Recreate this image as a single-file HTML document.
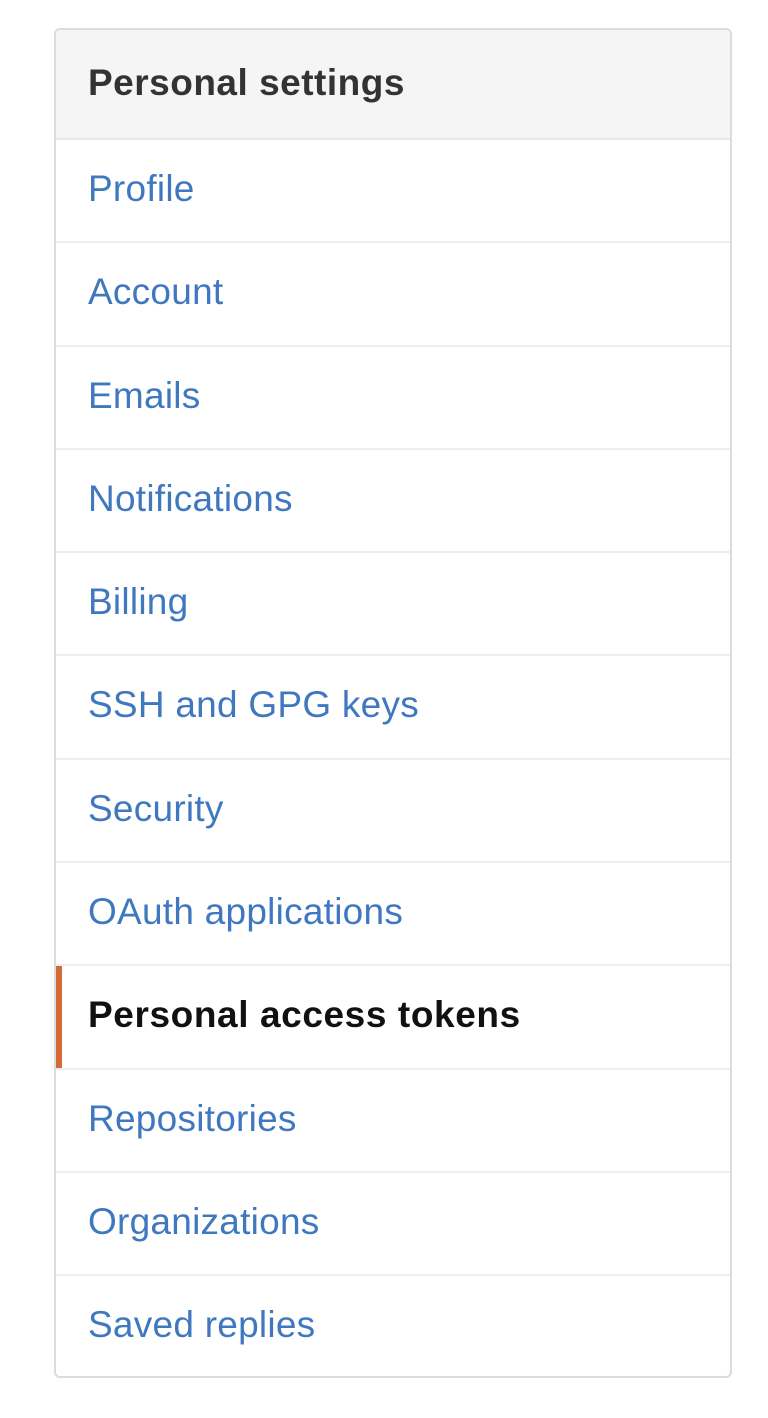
<!DOCTYPE html>
<html><head><style>
body{margin:0;background:#fff;width:768px;height:1418px;font-family:"Liberation Sans",Arial,sans-serif;}
.box{position:absolute;left:54px;top:28px;width:674px;height:1346px;border:2px solid #dcdcdc;border-radius:6px;overflow:hidden;}
.h{height:108px;background:#f5f5f5;border-bottom:2px solid #e8e8e8;font-weight:bold;color:#333;font-size:37px;line-height:106px;padding-left:32px;letter-spacing:0.5px;}
.r{height:101.3px;border-bottom:2px solid #eeeeee;font-size:37px;line-height:98px;padding-left:32px;color:#4078c0;position:relative;letter-spacing:0.25px;}
.r:last-child{border-bottom:none;}
.s{color:#111;font-weight:bold;letter-spacing:0.6px;}
.s:before{content:"";position:absolute;left:0;top:0;bottom:0;width:6px;background:#d26b35;}
</style></head><body>
<div class="box">
<div class="h">Personal settings</div>
<div class="r">Profile</div>
<div class="r">Account</div>
<div class="r">Emails</div>
<div class="r">Notifications</div>
<div class="r">Billing</div>
<div class="r">SSH and GPG keys</div>
<div class="r">Security</div>
<div class="r">OAuth applications</div>
<div class="r s">Personal access tokens</div>
<div class="r">Repositories</div>
<div class="r">Organizations</div>
<div class="r">Saved replies</div>
</div>
</body></html>
